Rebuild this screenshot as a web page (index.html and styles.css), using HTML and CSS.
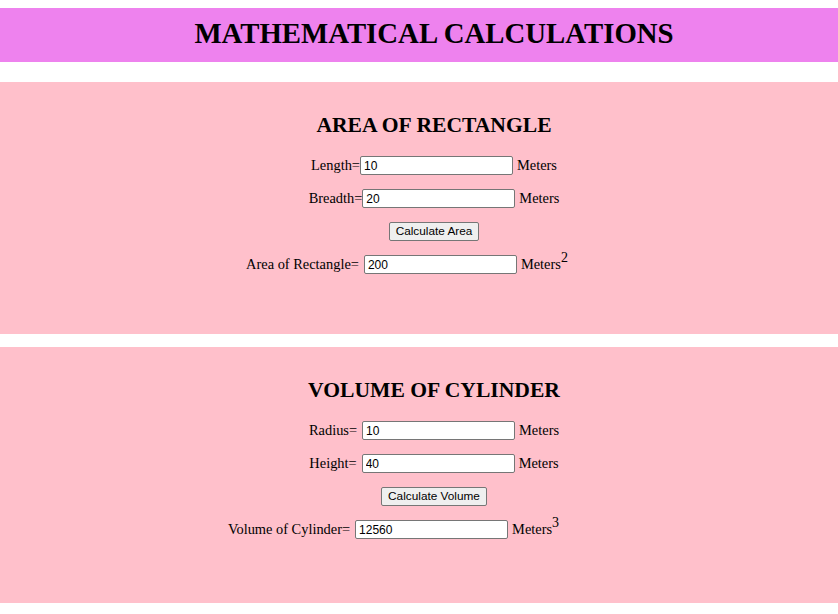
FILE: index.html
```html
<!DOCTYPE html>
<html lang="en">
<head>
<meta charset="utf-8">
<title>Mathematical Calculations</title>
<link rel="stylesheet" href="styles.css">
</head>
<body>
<header class="banner">
  <h1 class="title">MATHEMATICAL CALCULATIONS</h1>
</header>
<main class="sections">
  <section class="panel">
    <h2 class="panel-title">AREA OF RECTANGLE</h2>
    <div class="row"><span class="label">Length=</span><input class="field" type="text" value="10"><span class="unit">Meters</span></div>
    <div class="row"><span class="label">Breadth=</span><input class="field" type="text" value="20"><span class="unit">Meters</span></div>
    <div class="row"><button class="btn" type="button">Calculate Area</button></div>
    <div class="row row--area"><span class="label label--spaced">Area of Rectangle=</span><input class="field" type="text" value="200"><span class="unit">Meters<sup class="power">2</sup></span></div>
  </section>
  <section class="panel panel--volume">
    <h2 class="panel-title">VOLUME OF CYLINDER</h2>
    <div class="row"><span class="label label--spaced">Radius=</span><input class="field" type="text" value="10"><span class="unit">Meters</span></div>
    <div class="row"><span class="label label--spaced">Height=</span><input class="field" type="text" value="40"><span class="unit">Meters</span></div>
    <div class="row"><button class="btn" type="button">Calculate Volume</button></div>
    <div class="row row--volume"><span class="label label--spaced">Volume of Cylinder=</span><input class="field" type="text" value="12560"><span class="unit">Meters<sup class="power">3</sup></span></div>
  </section>
</main>
</body>
</html>
```
FILE: styles.css
```css
html, body {
  margin: 0;
  padding: 0;
  background: #ffffff;
}

body {
  font-family: "Liberation Serif", "Times New Roman", serif;
  color: #000000;
  font-size: 14.4px;
}

.banner {
  margin-top: 8px;
  padding: 9px 0 13px 30px;
  background: #ee82ee;
}

.title {
  margin: 0;
  font-size: 28.8px;
  line-height: 32px;
  font-weight: bold;
  text-align: center;
}

.sections {
  margin-top: 20px;
  display: flex;
  flex-direction: column;
  gap: 13px;
}

.panel {
  background: #ffc0cb;
  padding: 31px 0 53px 30px;
}

.panel--volume {
  padding-bottom: 57px;
}

.panel-title {
  margin: 0 0 12px;
  font-size: 21.6px;
  line-height: 24px;
  font-weight: bold;
  text-align: center;
}

.row {
  height: 33px;
  display: flex;
  justify-content: center;
  align-items: center;
  white-space: nowrap;
}

.row--area {
  padding-right: 54px;
}

.row--volume {
  padding-right: 81px;
}

.label--spaced {
  margin-right: 5px;
}

.unit {
  margin-left: 4px;
}

.power {
  font-size: 14px;
  line-height: 0;
  vertical-align: 7px;
}

.field {
  box-sizing: border-box;
  width: 153px;
  height: 19px;
  margin: 0;
  padding: 1px 3px;
  border: 1px solid #767676;
  border-radius: 2px;
  background: #ffffff;
  color: #000000;
  font-family: "Liberation Sans", Arial, sans-serif;
  font-size: 12px;
}

.btn {
  box-sizing: border-box;
  height: 19px;
  margin: 0;
  padding: 1px 6px;
  border: 1px solid #767676;
  border-radius: 2px;
  background: #efefef;
  color: #000000;
  font-family: "Liberation Sans", Arial, sans-serif;
  font-size: 11.8px;
  line-height: 15px;
}
```
